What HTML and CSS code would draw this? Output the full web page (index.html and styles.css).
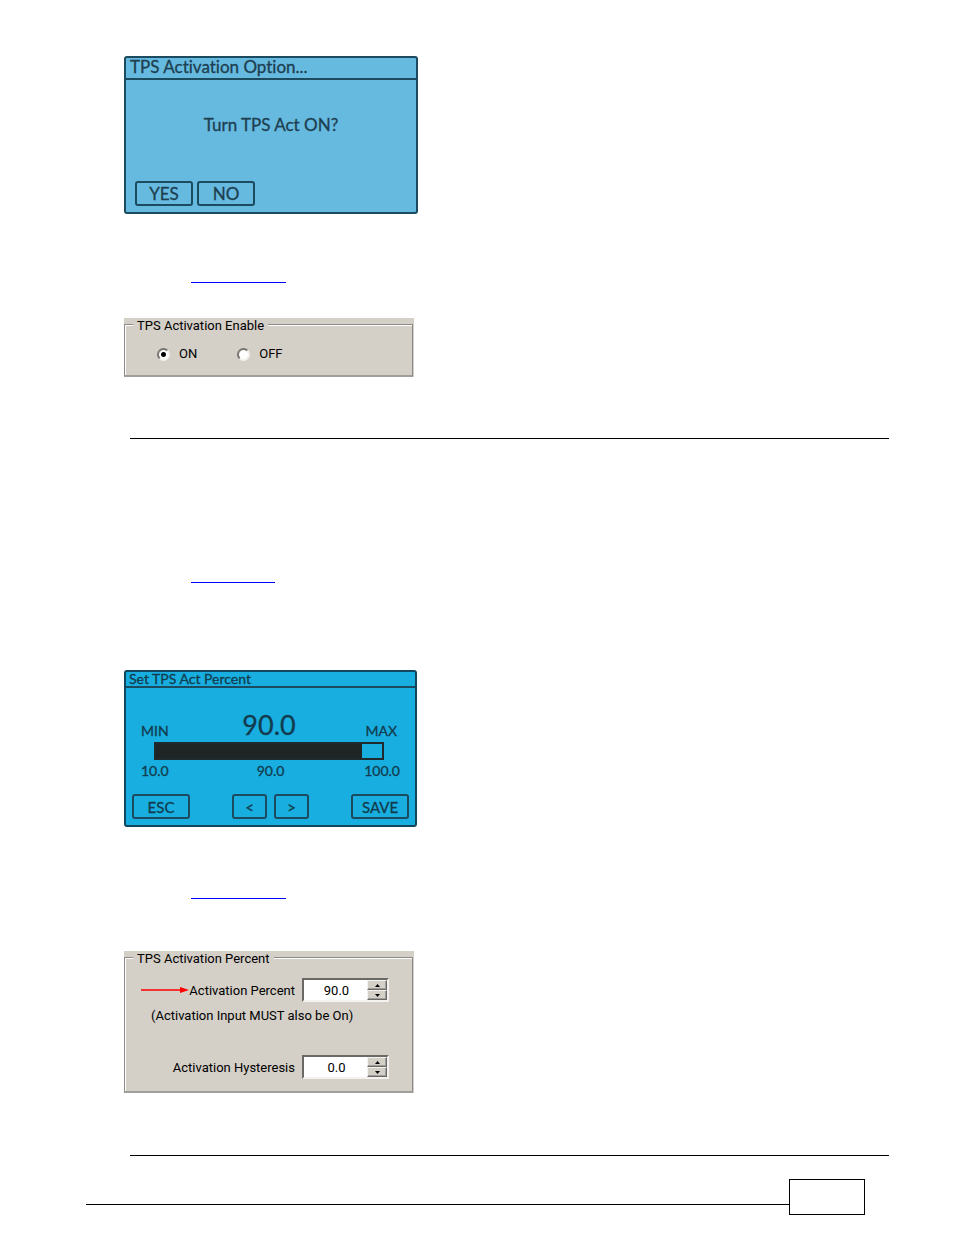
FILE: index.html
```html
<!DOCTYPE html>
<html lang="en">
<head>
    <meta charset="UTF-8">
    <meta name="viewport" content="width=device-width, initial-scale=1.0">
    <title>TPS Activation</title>
    <link rel="stylesheet" href="styles.css">
</head>
<body>
    <main class="content">
        <section class="lcd lcd-option">
            <div class="lcd-title">TPS Activation Option...</div>
            <p class="lcd-message">Turn TPS Act ON?</p>
            <div class="lcd-buttons">
                <button type="button" class="lcd-button">YES</button>
                <button type="button" class="lcd-button">NO</button>
            </div>
        </section>

        <a href="#enable" class="blank-link"></a>

        <div class="panel panel-enable" id="enable">
            <fieldset class="group">
                <legend>TPS Activation Enable</legend>
                <div class="radio-row">
                    <label class="radio"><input type="radio" name="tps" checked>ON</label>
                    <label class="radio"><input type="radio" name="tps">OFF</label>
                </div>
            </fieldset>
        </div>

        <hr class="rule">

        <a href="#percent" class="blank-link blank-link-short"></a>

        <section class="lcd lcd-percent">
            <div class="lcd-title">Set TPS Act Percent</div>
            <div class="scale scale-top">
                <span>MIN</span>
                <span class="scale-value">90.0</span>
                <span>MAX</span>
            </div>
            <div class="bar"><div class="bar-fill" style="width: 91%"></div></div>
            <div class="scale scale-bottom">
                <span>10.0</span>
                <span>90.0</span>
                <span>100.0</span>
            </div>
            <div class="lcd-buttons">
                <button type="button" class="lcd-button">ESC</button>
                <div class="lcd-arrows">
                    <button type="button" class="lcd-button lcd-button-small">&lt;</button>
                    <button type="button" class="lcd-button lcd-button-small">&gt;</button>
                </div>
                <button type="button" class="lcd-button">SAVE</button>
            </div>
        </section>

        <a href="#percent" class="blank-link"></a>

        <div class="panel panel-percent" id="percent">
            <fieldset class="group">
                <legend>TPS Activation Percent</legend>
                <div class="field">
                    <svg class="pointer" width="48" height="8" viewBox="0 0 48 8">
                        <path d="M0 4H42" stroke="#f00" stroke-width="1.3"/>
                        <path d="M39 1L48 4L39 7Z" fill="#f00"/>
                    </svg>
                    <label for="act-percent">Activation Percent</label>
                    <div class="spinner">
                        <input type="text" id="act-percent" value="90.0">
                        <div class="spinner-buttons">
                            <button type="button" aria-label="Up"><svg width="5" height="3" viewBox="0 0 5 3"><path d="M0 3L2.500 0L5 3Z"/></svg></button>
                            <button type="button" aria-label="Down"><svg width="5" height="3" viewBox="0 0 5 3"><path d="M0 0L2.500 3L5 0Z"/></svg></button>
                        </div>
                    </div>
                </div>
                <p class="note">(Activation Input MUST also be On)</p>
                <div class="field">
                    <label for="act-hysteresis">Activation Hysteresis</label>
                    <div class="spinner">
                        <input type="text" id="act-hysteresis" value="0.0">
                        <div class="spinner-buttons">
                            <button type="button" aria-label="Up"><svg width="5" height="3" viewBox="0 0 5 3"><path d="M0 3L2.500 0L5 3Z"/></svg></button>
                            <button type="button" aria-label="Down"><svg width="5" height="3" viewBox="0 0 5 3"><path d="M0 0L2.500 3L5 0Z"/></svg></button>
                        </div>
                    </div>
                </div>
            </fieldset>
        </div>

        <hr class="rule">
    </main>

    <footer class="page-footer">
        <div class="footer-line"></div>
        <div class="page-number"></div>
    </footer>
</body>
</html>
```
FILE: styles.css
```css
* {
    box-sizing: border-box;
}

body {
    margin: 0;
    background-color: #fff;
    color: #000;
    font-family: Roboto, "Liberation Sans", sans-serif;
    font-size: 13px;
}

p {
    margin: 0;
}

.content {
    padding: 56px 65px 0 124px;
}

/* LCD screens */
.lcd {
    display: flex;
    flex-direction: column;
    width: 294px;
    border: 2px solid #1c4a5e;
    border-radius: 3px;
    color: #1d3f50;
    font-family: Lato, "Open Sans", sans-serif;
    font-variant-ligatures: none;
    -webkit-text-stroke: 0.3px;
}

.lcd-option {
    height: 158px;
    background-color: #66b9df;
}

.lcd-percent {
    width: 293px;
    height: 157px;
    margin-top: 87px;
    background-color: #18aee0;
    border-color: #11465c;
    color: #123c4e;
}

.lcd-title {
    height: 22px;
    padding-left: 4px;
    border-bottom: 2px solid #1c4a5e;
    font-size: 17px;
    line-height: 17px;
}

.lcd-percent .lcd-title {
    height: 16px;
    padding-left: 3px;
    font-size: 14px;
    line-height: 14px;
}

.lcd-message {
    margin-top: 34px;
    font-size: 17px;
    line-height: 22px;
    text-align: center;
}

.lcd-buttons {
    display: flex;
    gap: 4px;
    margin-top: auto;
    padding: 0 9px 6px;
}

.lcd-percent .lcd-buttons {
    justify-content: space-between;
    padding: 0 6px 6px;
}

.lcd-arrows {
    display: flex;
    gap: 7px;
}

.lcd-button {
    width: 58px;
    height: 25px;
    padding: 0;
    border: 2px solid #1c4a5e;
    border-radius: 3px;
    background: none;
    color: inherit;
    font-family: inherit;
    font-size: 17px;
    line-height: 20px;
}

.lcd-percent .lcd-button {
    font-size: 15px;
}

.lcd-percent .lcd-button-small {
    width: 35px;
}

.scale {
    display: grid;
    grid-template-columns: 1fr auto 1fr;
    padding: 0 15px;
    font-size: 14px;
    line-height: 18px;
}

.scale span:last-child {
    text-align: right;
}

.scale-top {
    align-items: end;
    margin-top: 22px;
    padding-right: 18px;
}

.scale-value {
    font-size: 27px;
    line-height: 30px;
}

.scale-bottom {
    margin-top: 2px;
}

.bar {
    height: 18px;
    margin: 2px 31px 0 28px;
    border: 2px solid #1f2a2e;
}

.bar-fill {
    height: 100%;
    background-color: #1f2424;
}

/* Link lines */
.blank-link {
    display: block;
    width: 95px;
    height: 19px;
    margin: 50px 0 0 67px;
    border-bottom: 1px solid #00f;
}

.blank-link-short {
    width: 84px;
    margin-top: 125px;
}

.lcd-percent + .blank-link {
    margin-top: 53px;
}

/* Grey settings panels */
.panel {
    width: 290px;
    padding-right: 1px;
    background-color: #d4cfc7;
}

.panel-enable {
    height: 59px;
    margin-top: 35px;
}

.panel-percent {
    height: 142px;
    margin-top: 52px;
}

.group {
    height: 100%;
    min-width: 0;
    margin: 0;
    padding: 0 23px 0 8px;
    border: 1px solid #8c8a86;
    border-bottom-width: 2px;
    border-bottom-color: #a09e9a;
    box-shadow: inset 1px 1px #fff;
}

.group legend {
    padding: 3px 4px 0;
    background-color: #d4cfc7;
    line-height: 10px;
}

.radio-row {
    display: flex;
    gap: 40px;
    padding: 15px 0 0 24px;
}

.radio {
    display: flex;
    align-items: center;
    gap: 9px;
    line-height: 16px;
}

.radio input {
    appearance: none;
    width: 13px;
    height: 13px;
    margin: 0;
    border: 2px solid;
    border-color: #77746f #f4f2ee #f4f2ee #77746f;
    border-radius: 50%;
    background-color: #fff;
}

.radio input:checked {
    background-image: radial-gradient(circle, #000 2px, #fff 3px);
}

.field {
    display: flex;
    align-items: center;
    justify-content: flex-end;
    margin-top: 14px;
}

.note {
    margin-top: 6px;
    padding-left: 18px;
    line-height: 16px;
}

.note + .field {
    margin-top: 31px;
}

.spinner {
    display: flex;
    width: 87px;
    height: 24px;
    margin-left: 7px;
    border: 2px solid;
    border-color: #6b6966 #f4f2ee #f4f2ee #6b6966;
    background-color: #fff;
}

.spinner input {
    flex: 1;
    min-width: 0;
    padding: 0 0 0 2px;
    border: none;
    outline: none;
    background: none;
    font: inherit;
    text-align: center;
}

.spinner-buttons {
    display: flex;
    flex-direction: column;
    width: 20px;
}

.spinner-buttons button {
    display: flex;
    flex: 1;
    align-items: center;
    justify-content: center;
    padding: 0;
    border: 1px solid;
    border-color: #f4f2ee #6b6966 #6b6966 #f4f2ee;
    box-shadow: inset -1px -1px #a09e9a;
    background-color: #d4cfc7;
}

/* Rules and footer */
.rule {
    height: 1px;
    margin: 61px 0 0 6px;
    border: none;
    background-color: #000;
}

.panel-percent + .rule {
    margin-top: 62px;
}

.page-footer {
    display: flex;
    align-items: center;
    margin-top: 23px;
    padding: 0 89px 0 86px;
}

.footer-line {
    flex: 1;
    margin-top: 15px;
    border-top: 1px solid #000;
}

.page-number {
    width: 76px;
    height: 36px;
    border: 1px solid #000;
}
```
